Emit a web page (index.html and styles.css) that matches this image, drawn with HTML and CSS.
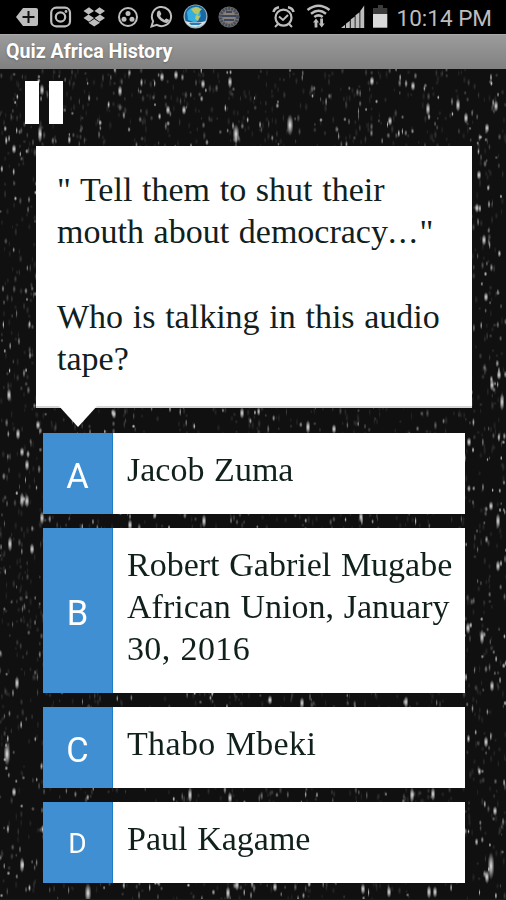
FILE: index.html
```html
<!DOCTYPE html>
<html lang="en">
<head>
    <meta charset="UTF-8">
    <meta name="viewport" content="width=device-width, initial-scale=1.0">
    <title>Quiz Africa History</title>
    <link rel="stylesheet" href="styles.css">
</head>
<body>
    <div class="status-bar">
        <svg class="status-icons" width="390" height="34" viewBox="0 0 390 34">
            <!-- back tag with plus -->
            <path fill="#bdbdbd" d="M16 17l7-9h13q2 0 2 2v14q0 2-2 2H23z"/>
            <path stroke="#111" stroke-width="2" d="M28.500 11v12M22.500 17h12"/>
            <!-- instagram -->
            <g fill="none" stroke="#bdbdbd" stroke-width="2.200">
                <rect x="51.200" y="7.700" width="18.800" height="18.600" rx="5"/>
                <circle cx="60.500" cy="17" r="4.700"/>
            </g>
            <circle cx="66" cy="11.500" r="1.400" fill="#bdbdbd"/>
            <!-- dropbox -->
            <g fill="#bdbdbd">
                <path d="M83.500 11l5.500-3.700 5 3.600-5.500 3.600zM94.500 10.900l5-3.600 5.500 3.700-5 3.500zM83.500 18l5-3.500 5.500 3.600-5 3.600zM94.500 18.100l5.500-3.600 5 3.500-5.500 3.700z"/>
                <path d="M88.500 22.700l5.700-3.700 5.800 3.700-5.800 3.800z"/>
            </g>
            <!-- three dots in a ring -->
            <circle cx="128" cy="17" r="9" fill="none" stroke="#bdbdbd" stroke-width="2"/>
            <g fill="#bdbdbd">
                <circle cx="128" cy="13.500" r="2.500"/>
                <circle cx="124" cy="19.200" r="2.500"/>
                <circle cx="132" cy="19.200" r="2.500"/>
            </g>
            <!-- whatsapp -->
            <path fill="none" stroke="#bdbdbd" stroke-width="2" d="M151.500 26.500l1.600-5.300a9.600 9.600 0 1 1 3.700 3.700z"/>
            <path fill="#bdbdbd" d="M157.600 11.300q1.800-1.500 2.700.1l1 2.300q.2 1-1.200 2.200 1.500 2.900 4.500 4.100 1-1.700 1.900-1.500l2.500 1.300q.7 1.600-1.600 3-2.700 1-6.800-2.200-5.900-5-3-9.300z"/>
            <!-- globe -->
            <circle cx="195.500" cy="16.500" r="12" fill="#a6b6bc"/>
            <circle cx="195.500" cy="16" r="10.800" fill="#1768a4"/>
            <path fill="#35aee0" d="M187 12q4-6 12-5l2 9-5 7-8-3z"/>
            <path fill="#b8c667" d="M191 9l5-2 6 2-3 3-1 3-4-2zM196 15l4 1-2 5-3-2z"/>
            <path fill="#d8e3e6" d="M185 21q10 3 21 0-2 5-10 6-8 0-11-6z"/>
            <path fill="#267bb0" d="M189 23h13l-3 2h-8z"/>
            <!-- round seal -->
            <circle cx="229" cy="17" r="10.500" fill="#77736d"/>
            <circle cx="229" cy="17" r="8.500" fill="none" stroke="#454c5d" stroke-width="3" stroke-dasharray="2 1"/>
            <circle cx="229" cy="17" r="6" fill="#8a8078"/>
            <path stroke="#3b4660" stroke-width="2" d="M222 16h14M224 20h10M226 12h6"/>
            <!-- alarm -->
            <g fill="none" stroke="#bdbdbd">
                <circle cx="283.500" cy="17.700" r="8" stroke-width="2.200"/>
                <path stroke-width="2.600" d="M273.500 12q1-4 5.500-4.700M293.500 12q-1-4-5.500-4.700"/>
                <path stroke-width="2" d="M279 16.500l4 3.500 5-5M278 24l-3 3M289 24l3 3"/>
            </g>
            <!-- wifi with arrows -->
            <g fill="none" stroke="#bdbdbd" stroke-width="2.500">
                <path d="M307.500 10q11-8.500 22 0M311 13.700q7.500-5.800 15 0M314.300 17q4.200-3.300 8.400 0"/>
            </g>
            <path fill="#bdbdbd" d="M316 18.500l3 4h-1.600v5h-2.800v-5H313zM321.700 27.500l-3-4h1.500v-5h2.800v5h1.700z"/>
            <!-- signal -->
            <path fill="#bdbdbd" d="M341 28l4-3.200V28zM345.900 23.800l3.900-3V28h-3.900zM350.700 19.600l4-3.200V28h-4zM355.500 15.300l4-3V28h-4zM360.300 11l3.900-5.500V28h-3.900z"/>
            <!-- battery -->
            <path fill="#3c3c3c" d="M378 5h5v3h4.300v6H373V8h5z"/>
            <path fill="#d9d9d9" d="M373 14h14.300v13.700H373z"/>
        </svg>
        <span class="clock">10:14 PM</span>
    </div>
    <div class="title-bar">Quiz Africa History</div>

    <div class="game">
        <canvas class="sky" id="sky" width="506" height="831"></canvas>
        <div class="pause-button">
            <span class="pause-line"></span>
            <span class="pause-line"></span>
        </div>

        <div class="question">
            " Tell them to shut their<br>mouth about democracy<span class="dots">...</span>"<br><br>Who is talking in this audio<br>tape?
        </div>

        <div class="answers">
            <div class="answer">
                <div class="letter">A</div>
                <div class="answer-text">Jacob Zuma</div>
            </div>
            <div class="answer answer-tall">
                <div class="letter">B</div>
                <div class="answer-text">Robert Gabriel Mugabe<br>African Union, January<br><span class="wide">30, 2016</span></div>
            </div>
            <div class="answer">
                <div class="letter">C</div>
                <div class="answer-text wide">Thabo Mbeki</div>
            </div>
            <div class="answer">
                <div class="letter letter-small">D</div>
                <div class="answer-text">Paul Kagame</div>
            </div>
        </div>
    </div>

    <script src="stars.js"></script>
</body>
</html>
```
FILE: styles.css
```css
* {
    box-sizing: border-box;
}
body {
    margin: 0;
    height: 900px;
    overflow: hidden;
    background-color: #101010;
    font-family: Roboto, sans-serif;
}
.status-bar {
    display: flex;
    justify-content: space-between;
    height: 34px;
    padding-right: 14px;
    background-color: #000;
}
.clock {
    color: #bdbdbd;
    font-size: 22.5px;
    line-height: 36px;
    white-space: nowrap;
}
.title-bar {
    height: 35px;
    padding-left: 6px;
    background: linear-gradient(#9c9c9c, #808080);
    border-top: 1px solid #aaa;
    color: #fff;
    font-size: 19.6px;
    font-weight: bold;
    line-height: 34px;
    text-shadow: 0 1px 2px #666;
}
.game {
    position: relative;
    height: 831px;
    padding: 12px 34px 0 35px;
}
.sky {
    position: absolute;
    top: 0;
    left: 0;
    z-index: -1;
}
.pause-button {
    display: flex;
    gap: 10px;
    height: 43px;
    margin-left: -10px;
}
.pause-line {
    width: 14px;
    background-color: #fff;
}
.question {
    position: relative;
    height: 262px;
    margin-top: 22px;
    margin-left: 1px;
    padding: 23px 0 0 21px;
    background-color: #fff;
    border-bottom: 2px solid #d5d5d5;
    color: #10201c;
    font-family: "Liberation Serif", serif;
    font-size: 34px;
    line-height: 42.2px;
    word-spacing: 1.2px;
    white-space: nowrap;
}
.question::after {
    content: "";
    position: absolute;
    left: 22px;
    top: 259px;
    border: 20px solid transparent;
    border-top: 22px solid #fff;
    border-bottom: 0;
}
.dots {
    letter-spacing: 2px;
}
.answers {
    display: flex;
    flex-direction: column;
    gap: 14px;
    margin: 25px 7px 0 8px;
}
.answer {
    display: flex;
    height: 81px;
    background-color: #fff;
}
.answer-tall {
    height: 165px;
}
.letter {
    display: flex;
    align-items: center;
    justify-content: center;
    width: 70px;
    padding-top: 4px;
    background-color: #3f8fd2;
    border-right: 1px solid #1b7cc8;
    color: #fff;
    font-size: 34.5px;
}
.letter-small {
    padding-top: 2px;
    font-size: 28px;
}
.answer-text {
    padding: 16px 0 0 14px;
    color: #10201c;
    font-family: "Liberation Serif", serif;
    font-size: 34px;
    line-height: 42.2px;
    word-spacing: 1.2px;
    white-space: nowrap;
}
.wide {
    letter-spacing: 0.35px;
}
```
FILE: stars.js
```js
const ctx = document.getElementById('sky').getContext('2d');
let seed = 29;

function rnd() {
    seed = (seed * 16807) % 2147483647;
    return seed / 2147483647;
}

function star(x, y, rx, ry, alpha) {
    ctx.save();
    ctx.translate(x, y);
    ctx.scale(rx, ry);
    const glow = ctx.createRadialGradient(0, 0, 0, 0, 0, 1);
    glow.addColorStop(0, 'rgba(235,235,235,' + alpha + ')');
    glow.addColorStop(0.4, 'rgba(205,205,205,' + alpha * 0.7 + ')');
    glow.addColorStop(1, 'rgba(200,200,200,0)');
    ctx.fillStyle = glow;
    ctx.fillRect(-1, -1, 2, 2);
    ctx.restore();
}

ctx.fillStyle = '#101010';
ctx.fillRect(0, 0, 506, 831);

// small stars
for (let i = 0; i < 5600; i++) {
    const a = rnd();
    star(rnd() * 506, rnd() * 831, 1 + rnd(), 2 + rnd() * 3, 0.1 + a * a * a * a * 0.85);
}

// bright stars, in screen coordinates
const bright = [
    [40, 134, 9], [236, 134, 10], [290, 125, 11], [14, 149, 5], [120, 91, 6],
    [184, 110, 5], [203, 84, 5], [230, 82, 6], [428, 109, 7], [458, 105, 7],
    [496, 106, 6], [162, 77, 5], [176, 75, 5], [42, 90, 6], [168, 110, 5],
    [372, 81, 5], [413, 86, 5], [466, 118, 6], [487, 128, 5], [390, 121, 5],
    [484, 240, 6], [477, 208, 5], [479, 175, 5], [502, 402, 9], [492, 385, 6],
    [486, 297, 5], [499, 375, 5], [18, 434, 6], [9, 395, 7], [22, 452, 5],
    [38, 425, 5], [308, 427, 7], [242, 413, 6], [334, 429, 5], [114, 414, 5],
    [469, 442, 5], [22, 500, 8], [27, 501, 7], [10, 544, 8], [27, 465, 6],
    [42, 518, 7], [130, 525, 6], [204, 521, 7], [361, 517, 6], [498, 521, 8],
    [491, 506, 5], [482, 637, 8], [468, 628, 6], [498, 566, 6], [32, 549, 6],
    [7, 754, 12], [17, 683, 7], [14, 792, 5], [22, 865, 8], [88, 893, 10],
    [62, 690, 5], [190, 795, 8], [412, 795, 8], [433, 794, 7], [230, 798, 6],
    [302, 703, 6], [270, 700, 5], [406, 702, 6], [492, 686, 6], [486, 742, 6],
    [491, 866, 14], [487, 877, 7], [495, 811, 5], [363, 889, 6], [429, 892, 7],
    [389, 892, 6], [228, 893, 7], [237, 885, 6], [435, 892, 6], [275, 887, 5]
];
bright.forEach(([x, y, r]) => star(x, y - 69, r > 9 ? 3.5 : 2.5, r, 1));

ctx.fillStyle = '#17182b';
ctx.fillRect(0, 830, 506, 1);
```
